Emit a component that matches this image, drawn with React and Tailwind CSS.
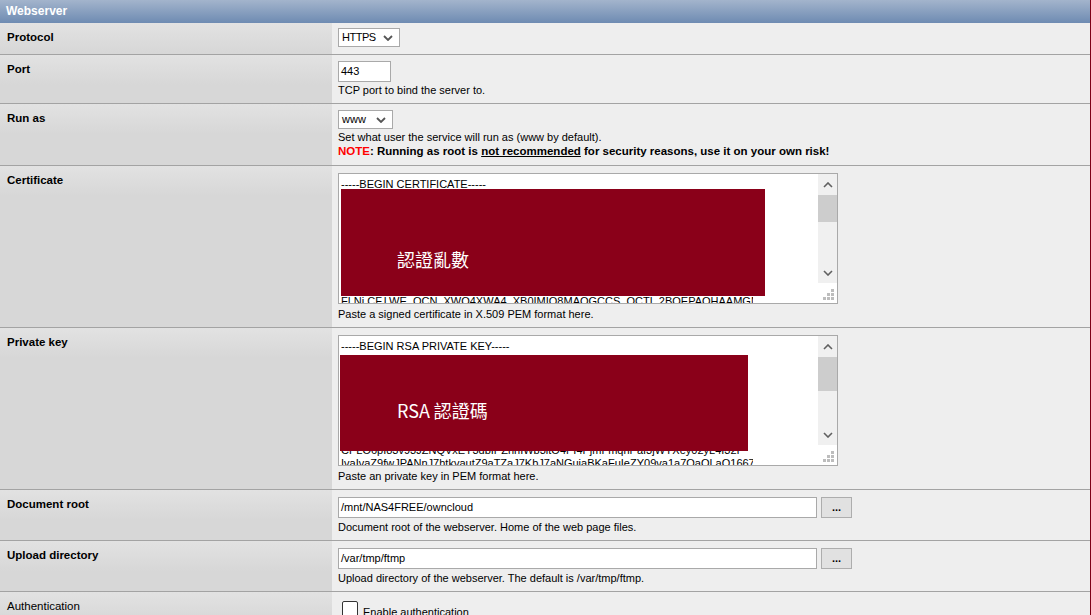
import React from "react";

const certLines = [
  "-----BEGIN CERTIFICATE-----",
  "MIIDXTCCAkWgAwIBAgIJAPjL3Wq0cKc2MA0GCSqGSIb3DQEBCwUAMEUxCzAJ",
  "LVN0YXRlMSEwHwYDVQQKDBhJbnRlcm5ldCBXaWRnaXRzIFB0eSBMdGQwHhcN",
  "MDgxNTIyWjBFMQswCQYDVQQGEwJUVzETMBEGA1UECAwKU29tZS1TdGF0ZTEh",
  "cyBQdHkgTHRkMIIBIjANBgkqhkiG9w0BAQEFAAOCAQ8AMIIBCgKCAQEAwq8c",
  "Yp4fGk8rWq0N7zT5uHc1dJ6eVb3oLmR9sQx2aKjF0tPnIy8wZgE4cBhD7rUo",
  "Hn8qLp2ZtVx4MiJ7sRk1oGy6bFe3NwQa9UcT5hDl0KmXj2vPz8YrB4tEi1Sf",
  "Tz1hNf8Wc4QeRgY6oLa2XkV9mPu3bIj7sDq5Hn0tZr8wEy1KcA4vGf2lMx6U",
  "Pm2oXs4FvBn7tQk1WeJr9cHy3aLd6gZu0iMp5NbT8xEq2VfKo4lRs7YhC1jD",
  "FLNi.CF.LWE..OCN..XWQ4XWA4..XB0IMIQ8MAOGCCS..OCTL.2BOEPAQHAAMGNABGBiOXB",
  "Qa7LmN2pR5sT8uV1wX4yZ0bC3dE6fG9hI2jK5lM8nO1pQ4rS7tU0vW3xY6zA",
];

const keyLines = [
  "-----BEGIN RSA PRIVATE KEY-----",
  "MIIEpAIBAAKCAQEAwq8cK2zTQ1nVb0Hq7vE1k9mJpR3aX2LsYp4fGk8rWq0N",
  "0tPnIy8wZgE4cBhD7rUoN1vXqM5lT6jHk2sA9eRf3YbWdC0gHn8qLp2ZtVx4",
  "0KmXj2vPz8YrB4tEi1SfoW7nCq3LgA6dZu9Vy5xRk0MbJp2sTz1hNf8Wc4Qe",
  "Zr8wEy1KcA4vGf2lMx6UoJb9pSe3TdWh7qNi5zLk0RgC8aYuPm2oXs4FvBn7",
  "8xEq2VfKo4lRs7YhC1jDw9UgA3nIz6eSt0OyXm8Pk5bQr2LcQa7LmN2pR5sT",
  "nO1pQ4rS7tU0vW3xY6zA9bC2dE5fG8hI1jK4lM7nO0pQ3rS6tU9vW2xY5zA8",
  "tU8vW1xY4zA7bC0dE3fG6hI9jK2lM5nO8pQ1rS4tU7vW0xY3zA6bC9dE2fG5",
  "CPLO6pI83v93JZNQVxEY3dbIPZhnIWb3itO4PI4PjmFmqhPaI3jWYXey02yL4I32I",
  "IvaIvaZ9fwJPANnJ7htkvautZ9aTZaJ7KbJ7aNGuiaBKaFuIeZY09va1a7QaQLaQ1667",
  "Rk3mP0sV6yB9eH2kN5qT8wZ1cF4iL7oR0uX3aD6gJ9mP2sV5yB8eH1kN4qT7",
];

function Chevron({ up = false, w = 10, h = 6, color = "#606060", sw = 1.6 }) {
  const pts = up
    ? `1,${h - 1} ${w / 2},1 ${w - 1},${h - 1}`
    : `1,1 ${w / 2},${h - 1} ${w - 1},1`;
  return (
    <svg width={w} height={h} viewBox={`0 0 ${w} ${h}`} className="block">
      <polyline points={pts} fill="none" stroke={color} strokeWidth={sw} />
    </svg>
  );
}

function Grip() {
  const c = "#bdbdbd";
  return (
    <svg width="12" height="12" viewBox="0 0 12 12" className="block">
      <rect x="8" y="0" width="3" height="3" fill={c} />
      <rect x="4" y="4" width="3" height="3" fill={c} />
      <rect x="8" y="4" width="3" height="3" fill={c} />
      <rect x="0" y="8" width="3" height="3" fill={c} />
      <rect x="4" y="8" width="3" height="3" fill={c} />
      <rect x="8" y="8" width="3" height="3" fill={c} />
    </svg>
  );
}

function FakeTextarea({ lines, thumbH, box, label }) {
  return (
    <div className="relative flex h-[131px] w-[500px] border border-[#a9a9a9] bg-white">
      <div className="flex-1 pl-[2px] pt-[4px]">
        <div className="h-full w-[412px] overflow-hidden text-[11px] leading-[13px] text-black">
          {lines.map((l, i) => (
            <div key={i} className="whitespace-nowrap">
              {l}
            </div>
          ))}
        </div>
      </div>
      <div className="flex w-[19px] shrink-0 flex-col">
        <div className="flex h-[109px] flex-col bg-[#f0f0f0]">
          <div className="flex h-[21px] items-center justify-center">
            <Chevron up />
          </div>
          <div className={`${thumbH} bg-[#cdcdcd]`} />
          <div className="flex-1" />
          <div className="flex h-[21px] items-center justify-center">
            <Chevron />
          </div>
        </div>
        <div className="flex flex-1 items-end justify-end bg-white pb-[2px] pr-[2px]">
          <Grip />
        </div>
      </div>
      <div className={`absolute bg-[#8a0019] text-white ${box}`}>{label}</div>
    </div>
  );
}

function Select({ value, w, textCls = "" }) {
  return (
    <div
      className={`flex h-[19px] items-center justify-between border border-[#a9a9a9] bg-white pl-[3px] pr-[6px] ${w}`}
    >
      <span className={`text-[11px] leading-[13px] ${textCls}`}>{value}</span>
      <Chevron w={10} h={6} color="#555555" sw={1.8} />
    </div>
  );
}

function TextInput({ value, w }) {
  return (
    <div
      className={`flex h-[21px] items-center border border-[#a9a9a9] bg-white px-[2px] text-[11px] leading-[13px] ${w}`}
    >
      {value}
    </div>
  );
}

function BrowseButton() {
  return (
    <div className="ml-[4px] flex h-[21px] w-[31px] items-center justify-center border border-[#adadad] bg-[#e1e1e1] text-[11px] font-bold leading-[13px]">
      ...
    </div>
  );
}

function Row({ label, h, bold = true, content, children }) {
  return (
    <div className={`flex border-b border-[#a3a3a3] ${h}`}>
      <div
        className={`w-[332px] shrink-0 bg-[linear-gradient(#e2e2e2,#d7d7d7_30px)] pl-[7px] pt-[7px] leading-[14px] ${
          bold ? "text-[11.5px] font-bold" : "text-[11.5px]"
        }`}
      >
        {label}
      </div>
      <div className={`flex-1 bg-[#eeeeee] ${content}`}>{children}</div>
    </div>
  );
}

export default function App() {
  return (
    <div className="h-[615px] w-full overflow-hidden border-r border-[#7d0016] bg-[#eeeeee] font-['Liberation_Sans',Arial,sans-serif] text-black">
      <div className="h-[23px] bg-[linear-gradient(#a3b4cc,#6e8bb2)] pl-[6px] text-[12px] font-bold leading-[23px] text-white">
        Webserver
      </div>

      <Row label="Protocol" h="h-[32px]" content="pl-[6px] pt-[5px]">
        <Select value="HTTPS" w="w-[62px]" textCls="tracking-[-0.5px]" />
      </Row>

      <Row label="Port" h="h-[49px]" content="pl-[6px] pt-[6px]">
        <TextInput value="443" w="w-[53px]" />
        <div className="mt-[1px] text-[11px] leading-[14px]">TCP port to bind the server to.</div>
      </Row>

      <Row label="Run as" h="h-[62px]" content="pl-[6px] pt-[6px]">
        <Select value="www" w="w-[55px]" />
        <div className="mt-[1px] text-[11px] leading-[14px]">
          Set what user the service will run as (www by default).
        </div>
        <div className="text-[11.5px] font-bold leading-[15px]">
          <span className="text-[#ff0000]">NOTE</span>: Running as root is{" "}
          <span className="underline">not recommended</span> for security reasons, use it on your own risk!
        </div>
      </Row>

      <Row label="Certificate" h="h-[162px]" content="pl-[6px] pt-[7px]">
        <FakeTextarea
          lines={certLines}
          thumbH="h-[27px]"
          box="left-[2px] top-[15px] h-[107px] w-[424px] pl-[56px] pt-[60px] text-[18px] leading-[20px] font-['Noto_Sans_CJK_TC',sans-serif]"
          label="認證亂數"
        />
        <div className="mt-[3px] text-[11px] leading-[14px]">
          Paste a signed certificate in X.509 PEM format here.
        </div>
      </Row>

      <Row label="Private key" h="h-[162px]" content="pl-[6px] pt-[7px]">
        <FakeTextarea
          lines={keyLines}
          thumbH="h-[34px]"
          box="left-[1px] top-[19px] h-[96px] w-[408px] pl-[57px] pt-[45px] text-[18px] leading-[20px] font-['Noto_Sans_CJK_TC',sans-serif]"
          label="RSA 認證碼"
        />
        <div className="mt-[3px] text-[11px] leading-[14px]">Paste an private key in PEM format here.</div>
      </Row>

      <Row label="Document root" h="h-[51px]" content="pl-[6px] pt-[7px]">
        <div className="flex">
          <TextInput value="/mnt/NAS4FREE/owncloud" w="w-[479px]" />
          <BrowseButton />
        </div>
        <div className="mt-[2px] text-[11px] leading-[14px]">
          Document root of the webserver. Home of the web page files.
        </div>
      </Row>

      <Row label="Upload directory" h="h-[51px]" content="pl-[6px] pt-[7px]">
        <div className="flex">
          <TextInput value="/var/tmp/ftmp" w="w-[479px]" />
          <BrowseButton />
        </div>
        <div className="mt-[2px] text-[11px] leading-[14px]">
          Upload directory of the webserver. The default is /var/tmp/ftmp.
        </div>
      </Row>

      <Row label="Authentication" bold={false} h="h-[60px]" content="pl-[10px] pt-[9px]">
        <div className="flex items-start">
          <div className="h-[16px] w-[16px] rounded-[2px] border border-[#333333] bg-white" />
          <div className="ml-[5px] mt-[4px] text-[11px] leading-[14px]">Enable authentication</div>
        </div>
      </Row>
    </div>
  );
}
